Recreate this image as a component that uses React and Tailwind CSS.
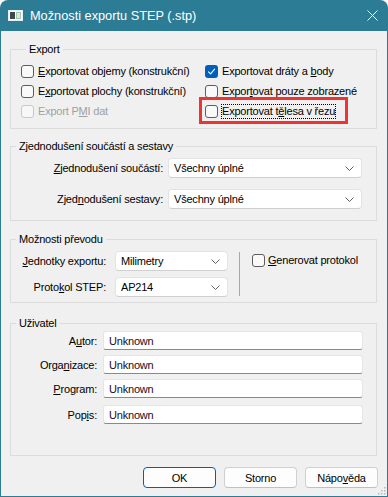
import React from "react";

function U({ children }) {
  return <span className="underline underline-offset-[1px] decoration-[1px]">{children}</span>;
}

function Check({ checked, disabled }) {
  if (checked) {
    return (
      <span className="flex h-[13px] w-[13px] shrink-0 items-center justify-center rounded-[3px] bg-[#005fb8]">
        <svg width="9" height="9" viewBox="0 0 9 9" fill="none">
          <path d="M1.5 4.8 L3.6 6.8 L7.6 2.2" stroke="white" strokeWidth="1.1" strokeLinecap="round" strokeLinejoin="round" />
        </svg>
      </span>
    );
  }
  return (
    <span
      className={
        "h-[13px] w-[13px] shrink-0 rounded-[3px] border " +
        (disabled ? "border-[#c8c8c8] bg-[#f7f7f7]" : "border-[#5d5d5d] bg-[#f9f9f9]")
      }
    />
  );
}

function Chevron() {
  return (
    <svg width="9" height="5" viewBox="0 0 9 5" fill="none" className="shrink-0">
      <path d="M0.5 0.5 L4.5 4.5 L8.5 0.5" stroke="#5f5f5f" strokeWidth="1" />
    </svg>
  );
}

function Combo({ value, className }) {
  return (
    <div
      className={
        "flex h-[20px] items-center justify-between rounded-[4px] border border-[#e3e3e3] border-b-[#cfcfcf] bg-white pl-[5px] pr-[7px] " +
        className
      }
    >
      <span>{value}</span>
      <Chevron />
    </div>
  );
}

function Field({ label, value, mt }) {
  return (
    <div className={"flex items-center " + mt}>
      <div className="w-[86px] text-right">{label}</div>
      <div className="ml-[6px] flex h-[19px] w-[260px] items-center rounded-[3px] border border-[#e5e5e5] border-b-[#8a8a8a] bg-white pl-[5px] text-[#1a0a1a]">
        {value}
      </div>
    </div>
  );
}

function Group({ title, className, children }) {
  return (
    <fieldset className={"border border-[#dcdcdc] " + className}>
      <legend className="ml-[5px] px-[3px] leading-[14px]">{title}</legend>
      {children}
    </fieldset>
  );
}

function Btn({ children, primary }) {
  return (
    <div
      className={
        "flex h-[21px] w-[73px] items-center justify-center rounded-[4px] border bg-[#fdfdfd] " +
        (primary ? "border-[#005fb8]" : "border-[#d0d0d0] border-b-[#c0c0c0]")
      }
    >
      {children}
    </div>
  );
}

export default function App() {
  return (
    <div className="h-[497px] w-[388px] overflow-hidden font-['Liberation_Sans',Arial,sans-serif] text-[11px] leading-[14px] tracking-[-0.2px] text-black">
      <div className="flex h-full w-full flex-col rounded-t-[8px] bg-[#2d7c96]">
        {/* Title bar */}
        <div className="flex h-[31px] shrink-0 items-center pl-[8px] pr-[10px] text-white">
          <svg width="15" height="11" viewBox="0 0 15 11" className="shrink-0">
            <rect x="0" y="0" width="15" height="11" fill="#e8eef0" />
            <rect x="1" y="1" width="13" height="9" fill="#ffffff" />
            <rect x="2" y="2" width="5" height="7" fill="#3a4a4f" />
            <rect x="8" y="2" width="5" height="7" fill="#9fc8b0" />
            <rect x="9" y="3" width="3" height="5" fill="#d9e9df" />
          </svg>
          <span className="ml-[7px] text-[12.75px] tracking-normal">Možnosti exportu STEP (.stp)</span>
          <svg width="11" height="11" viewBox="0 0 11 11" className="ml-auto" fill="none">
            <path d="M0.5 0.5 L10.5 10.5 M10.5 0.5 L0.5 10.5" stroke="white" strokeWidth="1" />
          </svg>
        </div>

        {/* Client */}
        <div className="relative mx-[1px] mb-[1px] flex flex-1 flex-col bg-[#f0f0f0] pl-[9px] pr-[10px] pt-[11px]">
          {/* Export */}
          <Group title="Export" className="pb-[7px] pl-[10px] pt-[5px]">
            <div className="grid grid-cols-[184px_1fr] grid-rows-[20px_20px_20px]">
              <div className="flex items-center gap-[4px]">
                <Check />
                <span><U>E</U>xportovat objemy (konstrukční)</span>
              </div>
              <div className="flex items-center gap-[4px]">
                <Check checked />
                <span>Exportovat dráty a <U>b</U>ody</span>
              </div>
              <div className="flex items-center gap-[4px]">
                <Check />
                <span>E<U>x</U>portovat plochy (konstrukční)</span>
              </div>
              <div className="flex items-center gap-[4px]">
                <Check />
                <span>Expor<U>t</U>ovat pouze zobrazené</span>
              </div>
              <div className="flex items-center gap-[4px] text-[#a0a0a0]">
                <Check disabled />
                <span>Export P<U>M</U>I dat</span>
              </div>
              <div className="relative flex items-center gap-[3px]">
                <Check />
                <span className="border border-dotted border-black leading-[13px]">Exportovat t<U>ě</U>lesa v řezu</span>
                <span className="absolute left-[-6px] top-[-4px] h-[27px] w-[149px] border-[3px] border-[#ee3333]" />
              </div>
            </div>
          </Group>

          {/* Zjednodušení */}
          <Group title="Zjednodušení součástí a sestavy" className="mt-[10px] pb-[11px] pt-[5px]">
            <div className="flex items-center">
              <div className="w-[152px] text-right"><U>Z</U>jednodušení součástí:</div>
              <Combo value="Všechny úplné" className="ml-[5px] w-[194px]" />
            </div>
            <div className="mt-[11px] flex items-center">
              <div className="w-[152px] text-right">Zjed<U>n</U>odušení sestavy:</div>
              <Combo value="Všechny úplné" className="ml-[5px] w-[194px]" />
            </div>
          </Group>

          {/* Možnosti převodu */}
          <Group title="Možnosti převodu" className="mt-[11px] pb-[5px] pt-[5px]">
            <div className="flex">
              <div className="flex flex-col gap-[6px]">
                <div className="flex items-center">
                  <div className="w-[95px] text-right"><U>J</U>ednotky exportu:</div>
                  <Combo value="Milimetry" className="ml-[9px] w-[113px]" />
                </div>
                <div className="flex items-center">
                  <div className="w-[95px] text-right">Proto<U>k</U>ol STEP:</div>
                  <Combo value="AP214" className="ml-[9px] w-[113px]" />
                </div>
              </div>
              <div className="ml-[11px] mt-[1px] h-[44px] w-[1px] bg-[#a8a8a8]" />
              <div className="ml-[12px] mt-[2px] flex h-[14px] items-center gap-[3px]">
                <Check />
                <span><U>G</U>enerovat protokol</span>
              </div>
            </div>
          </Group>

          {/* Uživatel */}
          <Group title="Uživatel" className="mt-[13px] h-[140px] pt-[1px]">
            <Field label={<>A<U>u</U>tor:</>} value="Unknown" mt="" />
            <Field label={<>Orga<U>n</U>izace:</>} value="Unknown" mt="mt-[5px]" />
            <Field label={<><U>P</U>rogram:</>} value="Unknown" mt="mt-[5px]" />
            <Field label={<>Pop<U>i</U>s:</>} value="Unknown" mt="mt-[7px]" />
          </Group>

          {/* Buttons */}
          <div className="-mr-[1px] mt-[11px] flex justify-end gap-[8px]">
            <Btn primary>OK</Btn>
            <Btn>Storno</Btn>
            <Btn>Nápo<U>v</U>ěda</Btn>
          </div>

          <svg width="9" height="9" viewBox="0 0 9 9" className="absolute bottom-[1px] right-[1px]">
            <g fill="#b8b8b8">
              <rect x="7" y="1" width="1.5" height="1.5" />
              <rect x="4" y="4" width="1.5" height="1.5" />
              <rect x="7" y="4" width="1.5" height="1.5" />
              <rect x="1" y="7" width="1.5" height="1.5" />
              <rect x="4" y="7" width="1.5" height="1.5" />
              <rect x="7" y="7" width="1.5" height="1.5" />
            </g>
          </svg>
        </div>
      </div>
    </div>
  );
}
